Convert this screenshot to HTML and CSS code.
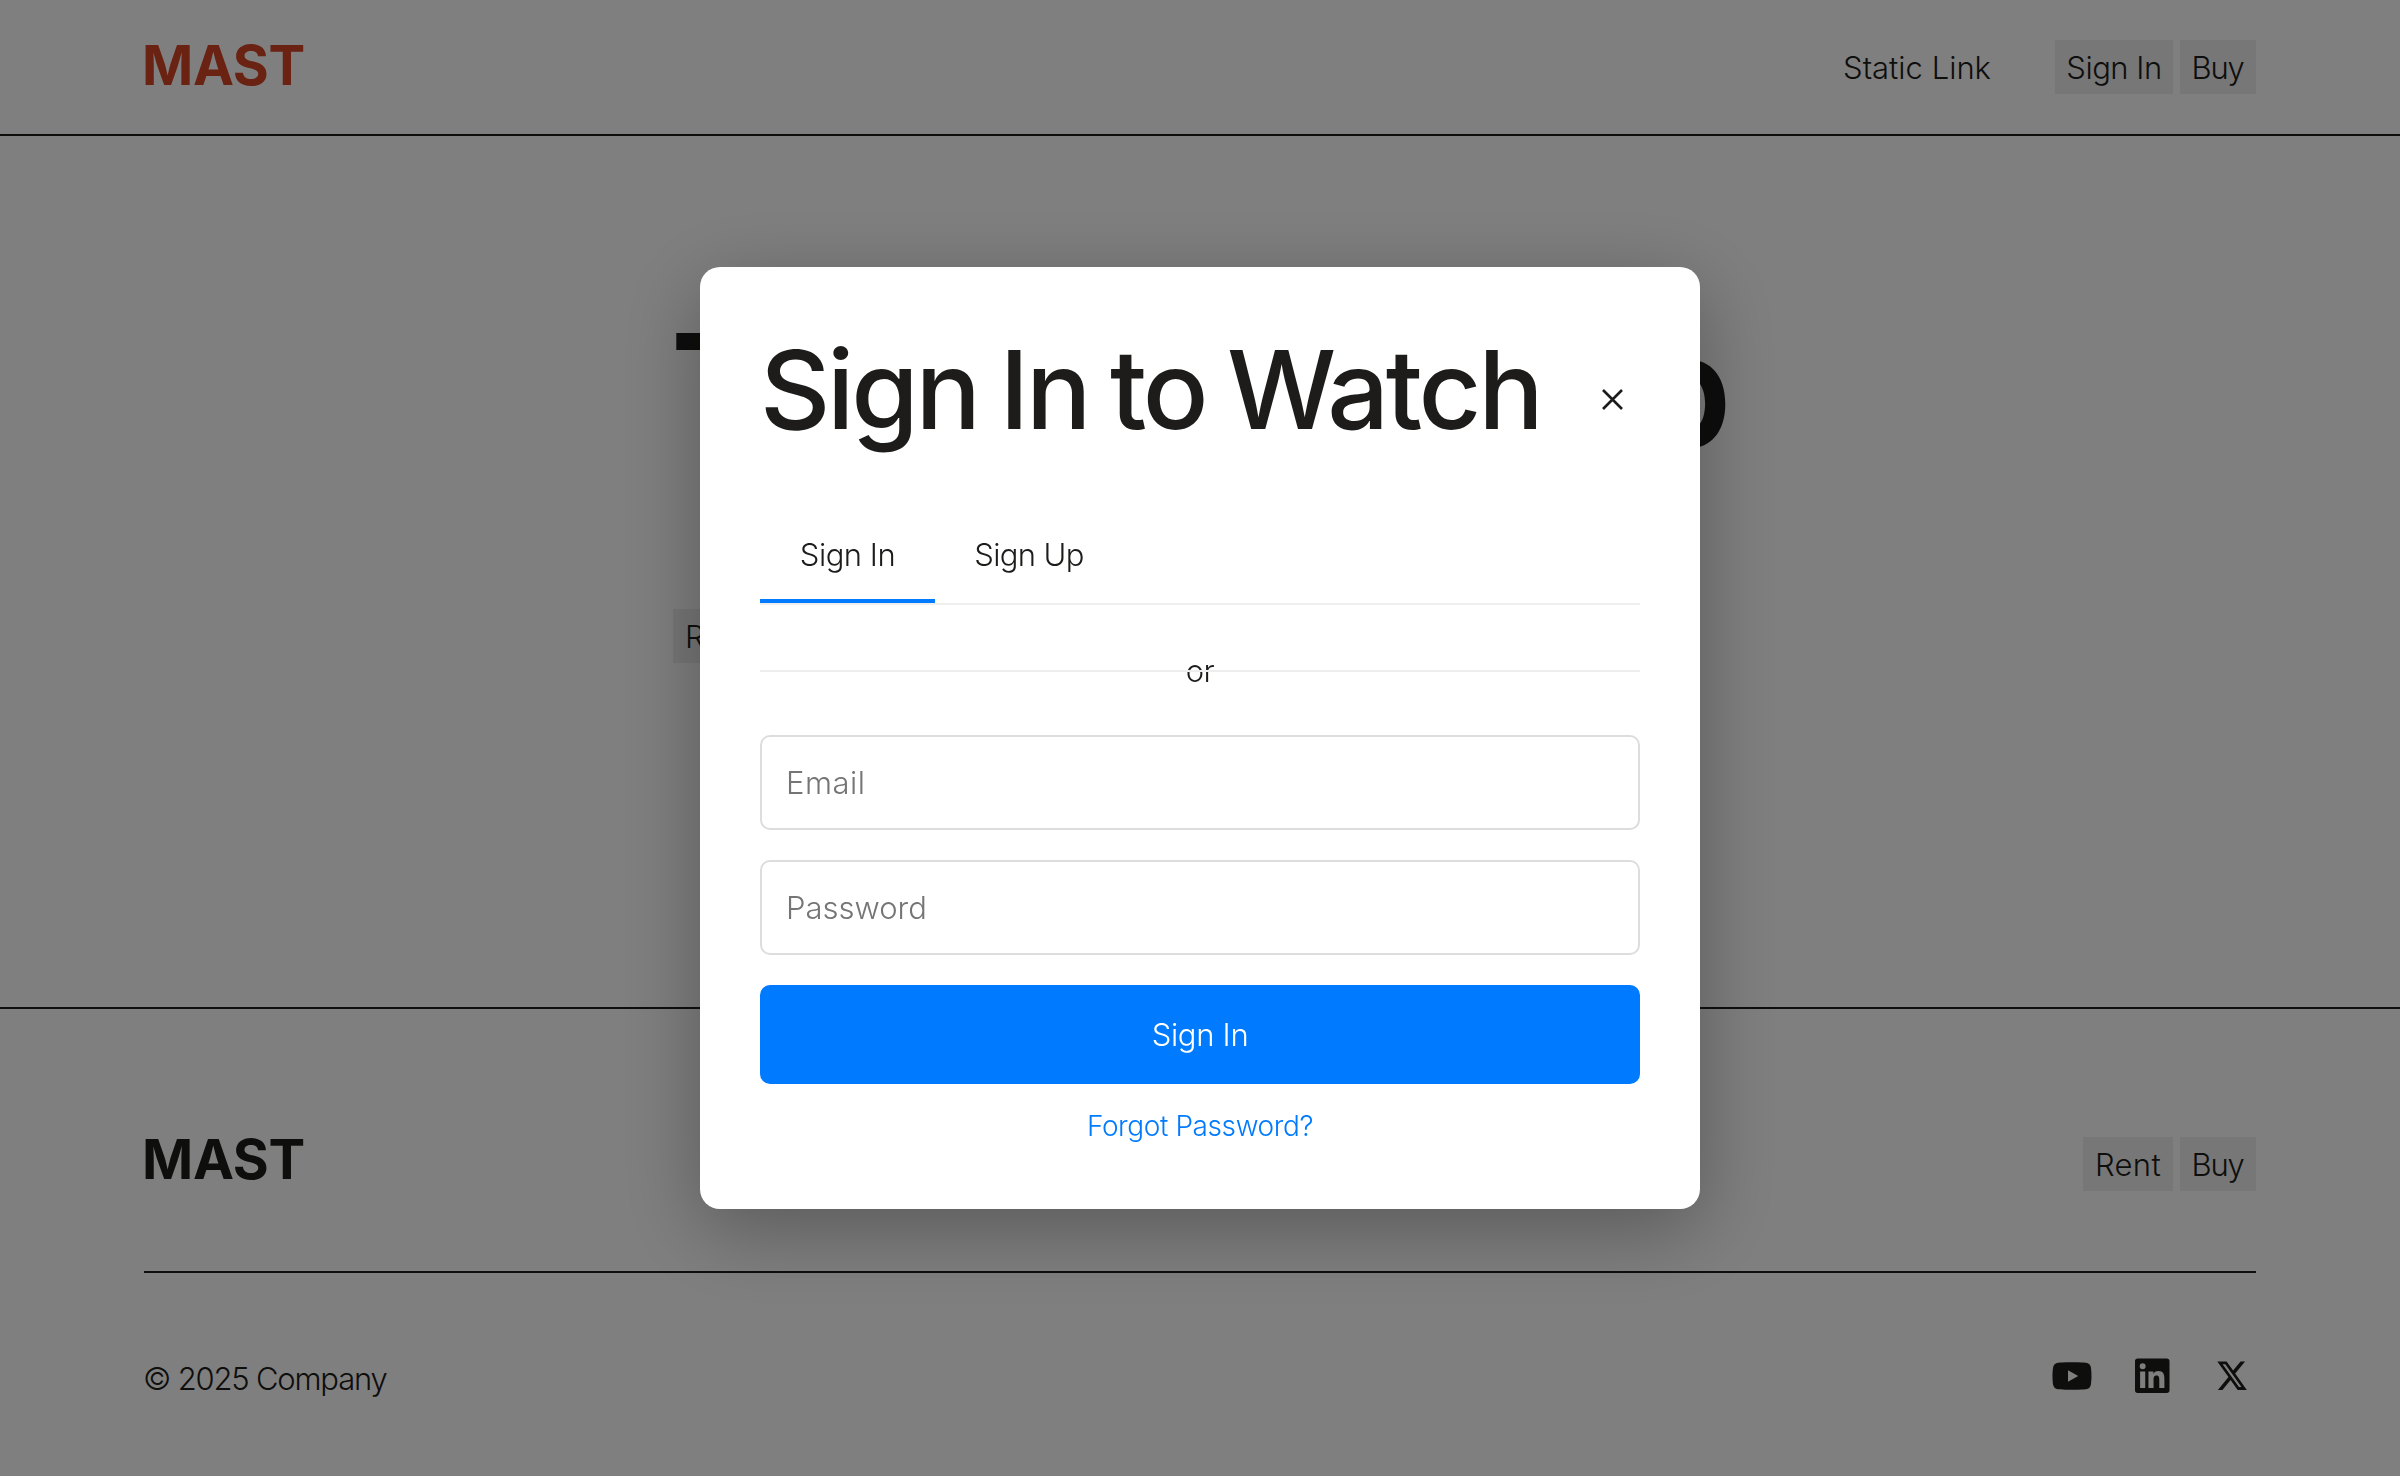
FILE: index.html
```html
<!DOCTYPE html>
<html lang="en">
<head>
<meta charset="utf-8">
<title>Mast</title>
<link rel="stylesheet" href="styles.css">
</head>
<body>
<header class="header">
  <a class="logo logo-accent">MAST</a>
  <nav class="nav">
    <a class="nav-link">Static Link</a>
    <div class="btn-group">
      <a class="btn btn-signin">Sign In</a>
      <a class="btn btn-buy">Buy</a>
    </div>
  </nav>
</header>
<main class="hero">
  <div class="hero-inner">
    <h1 class="hero-title">The Workshop</h1>
    <div class="btn-group"><a class="btn btn-rent">Rent</a><a class="btn btn-buy">Buy</a></div>
  </div>
</main>
<footer class="footer">
  <div class="footer-top">
    <a class="logo">MAST</a>
    <div class="btn-group"><a class="btn btn-rent">Rent</a><a class="btn btn-buy">Buy</a></div>
  </div>
  <div class="footer-bottom">
    <p class="copyright">© 2025 Company</p>
    <div class="social">
      <svg class="social-icon" viewBox="0 0 24 24"><path transform="translate(0.3 0.3) scale(0.975)" d="M23.498 6.186a3.016 3.016 0 0 0-2.122-2.136C19.505 3.545 12 3.545 12 3.545s-7.505 0-9.377.505A3.017 3.017 0 0 0 .502 6.186C0 8.07 0 12 0 12s0 3.93.502 5.814a3.016 3.016 0 0 0 2.122 2.136c1.871.505 9.376.505 9.376.505s7.505 0 9.377-.505a3.015 3.015 0 0 0 2.122-2.136C24 15.93 24 12 24 12s0-3.93-.502-5.814zM9.545 15.568V8.432L15.818 12l-6.273 3.568z"/></svg>
      <svg class="social-icon" viewBox="0 0 40 40"><path transform="translate(3 2.5) scale(1.4375)" d="M20.447 20.452h-3.554v-5.569c0-1.328-.027-3.037-1.852-3.037-1.853 0-2.136 1.445-2.136 2.939v5.667H9.351V9h3.414v1.561h.046c.477-.9 1.637-1.85 3.37-1.85 3.601 0 4.267 2.37 4.267 5.455v6.286zM5.337 7.433a2.062 2.062 0 0 1-2.063-2.065 2.064 2.064 0 1 1 2.063 2.065zm1.782 13.019H3.555V9h3.564v11.452zM22.225 0H1.771C.792 0 0 .774 0 1.729v20.542C0 23.227.792 24 1.771 24h20.451C23.2 24 24 23.227 24 22.271V1.729C24 .774 23.2 0 22.222 0h.003z"/></svg>
      <svg class="social-icon" viewBox="0 0 40 40"><path transform="translate(5.3 4) scale(1.23 1.31)" d="M18.901 1.153h3.68l-8.04 9.19L24 22.846h-7.406l-5.8-7.584-6.638 7.584H.474l8.6-9.83L0 1.154h7.594l5.243 6.932ZM17.61 20.644h2.039L6.486 3.24H4.298Z"/></svg>
    </div>
  </div>
</footer>
<div class="overlay">
  <section class="modal" role="dialog">
    <div class="modal-head">
      <h2 class="modal-title">Sign In to Watch</h2>
      <button class="close" aria-label="Close"><svg viewBox="0 0 21 21"><path d="M1 1 20 20M20 1 1 20"/></svg></button>
    </div>
    <div class="tabs">
      <a class="tab tab-active">Sign In</a>
      <a class="tab tab-signup">Sign Up</a>
    </div>
    <div class="divider">or</div>
    <form class="form">
      <input class="field field-email" type="text" placeholder="Email">
      <input class="field field-password" type="password" placeholder="Password">
      <button class="submit" type="button">Sign In</button>
    </form>
    <a class="forgot">Forgot Password?</a>
  </section>
</div>
</body>
</html>
```
FILE: styles.css
```css
* { box-sizing: border-box; margin: 0; padding: 0; }

body {
  height: 1476px;
  overflow: hidden;
  background: #fff;
  color: #1d1c1b;
  font: 300 31px/46px Inter, "Liberation Sans", sans-serif;
  letter-spacing: -0.4px;
}

/* Header */
.header {
  display: flex;
  justify-content: space-between;
  align-items: center;
  height: 136px;
  padding: 0 144px;
  border-bottom: 2px solid #1d1c1b;
}
.logo {
  margin-left: -2px;
  padding-bottom: 4px;
  font-size: 55px;
  font-weight: 700;
  line-height: 60px;
  letter-spacing: -0.3px;
}
.logo-accent { color: #d44424; }
.nav { display: flex; align-items: center; gap: 64px; }
.nav-link { padding-top: 2px; letter-spacing: 0; }
.btn-group { display: flex; gap: 7px; }
.btn {
  height: 54px;
  padding-top: 5px;
  background: #eee;
  text-align: center;
}
.btn-signin { width: 118px; letter-spacing: -0.5px; }
.btn-buy { width: 76px; padding-right: 1px; letter-spacing: -1.2px; }
.btn-rent { width: 90px; letter-spacing: 0.3px; }

/* Hero */
.hero {
  display: flex;
  justify-content: center;
  height: 871px;
  padding-top: 161px;
}
.hero-inner { width: 1054px; }
.hero-title {
  height: 186px;
  margin: 0 0 126px -3px;
  font-size: 155px;
  font-weight: 600;
  line-height: 186px;
  letter-spacing: -3.1px;
  white-space: nowrap;
}

/* Footer */
.footer { padding: 0 144px; border-top: 2px solid #1d1c1b; }
.footer-top {
  display: flex;
  justify-content: space-between;
  align-items: center;
  height: 264px;
  padding: 128px 0 80px;
  border-bottom: 2px solid #1d1c1b;
}
.footer-top .logo { padding-bottom: 10px; }
.footer-bottom {
  display: flex;
  justify-content: space-between;
  padding-top: 83px;
}
.copyright { margin-left: -1px; letter-spacing: -1.2px; }
.social { display: flex; gap: 40px; padding-right: 4px; }
.social-icon { width: 40px; height: 40px; fill: #1d1c1b; }

/* Sign-in modal */
.overlay {
  position: fixed;
  inset: 0;
  display: flex;
  align-items: center;
  justify-content: center;
  background: rgba(0, 0, 0, 0.5);
}
.modal {
  display: flex;
  flex-direction: column;
  width: 1000px;
  height: 942px;
  padding: 60px;
  border-radius: 20px;
  background: #fff;
  box-shadow: 0 20px 80px rgba(0, 0, 0, 0.3);
}
.modal-head { display: flex; justify-content: space-between; height: 126px; margin-bottom: 52px; }
.modal-title {
  font-size: 109px;
  font-weight: 500;
  line-height: 124px;
  letter-spacing: -3.3px;
  word-spacing: -4px;
  white-space: nowrap;
}
.close {
  display: flex;
  align-items: center;
  padding: 19px 17px 0 0;
  border: 0;
  background: none;
}
.close svg { width: 21px; height: 21px; fill: none; stroke: #1d1c1b; stroke-width: 2.6; }

.tabs { display: flex; height: 100px; border-bottom: 2px solid #eee; }
.tab { width: 175px; padding-top: 27px; text-align: center; letter-spacing: -0.5px; }
.tab-active { border-bottom: 4px solid #007bff; }
.tab-signup { width: 188px; letter-spacing: -0.65px; }

.divider {
  position: relative;
  margin: 42px 0 40px;
  line-height: 48px;
  text-align: center;
}
.divider::after {
  content: "";
  position: absolute;
  inset: 23px 0 auto;
  height: 2px;
  background: #eee;
}
.form { display: flex; flex-direction: column; gap: 30px; }
.field {
  height: 95px;
  padding: 0 24px;
  border: 2px solid #ddd;
  border-radius: 10px;
  font: inherit;
}
.field::placeholder { color: #757575; }
.field-email { letter-spacing: 0.5px; }
.field-password { letter-spacing: 0; }
.submit {
  height: 99px;
  border: 0;
  border-radius: 10px;
  background: #007bff;
  color: #fff;
  font: inherit;
  letter-spacing: -0.3px;
}
.forgot {
  margin-top: 19px;
  color: #007bff;
  font-size: 28px;
  text-align: center;
}
```
